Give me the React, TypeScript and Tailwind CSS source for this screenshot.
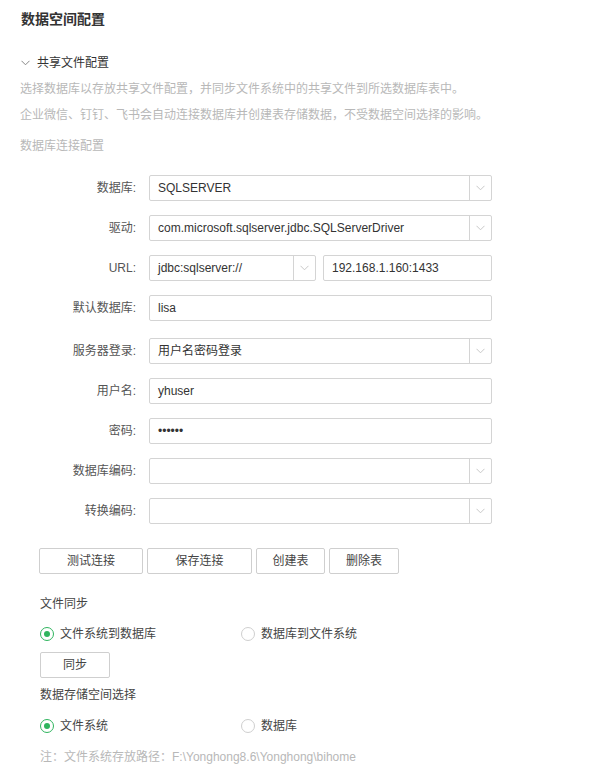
import React from 'react';

const FONT = { fontFamily: '"Liberation Sans", "Noto Sans CJK SC", sans-serif' };

function Chevron({ className = '' }: { className?: string }) {
  return (
    <svg width="9" height="6" viewBox="0 0 9 6" className={className}>
      <path d="M0.5 0.8 L4.5 4.8 L8.5 0.8" fill="none" stroke="currentColor" strokeWidth="1" />
    </svg>
  );
}

function Field({ value, select, width = 'w-[343px]' }: { value?: string; select?: boolean; width?: string }) {
  return (
    <div className={`flex h-[26px] ${width} border border-[#d4d4d4] rounded-[2px] bg-white`}>
      <div className="flex-1 flex items-center px-[8px] text-[12px] text-[#333] truncate">{value}</div>
      {select && (
        <div className="w-[22px] border-l border-[#d4d4d4] flex items-center justify-center text-[#c8c8c8]">
          <Chevron />
        </div>
      )}
    </div>
  );
}

function Row({ label, children, mt = 'mt-[14px]' }: { label: string; children: React.ReactNode; mt?: string }) {
  return (
    <div className={`flex items-center ${mt}`}>
      <div className="w-[117px] text-right text-[12px] text-[#555] pr-[1px]">{label}:</div>
      <div className="ml-[12px]">{children}</div>
    </div>
  );
}

function Radio({ checked, label }: { checked?: boolean; label: string }) {
  return (
    <div className="flex items-center leading-[16px]">
      <span
        className={`w-[14px] h-[14px] rounded-full border flex items-center justify-center ${
          checked ? 'border-[#2fb55e]' : 'border-[#cfcfcf]'
        }`}
      >
        {checked && <span className="w-[6px] h-[6px] rounded-full bg-[#2fb55e]" />}
      </span>
      <span className="ml-[6px] text-[12px] text-[#444]">{label}</span>
    </div>
  );
}

function Btn({ children, w }: { children: React.ReactNode; w: string }) {
  return (
    <button className={`h-[26px] ${w} border border-[#cfcfcf] rounded-[2px] bg-white text-[12px] text-[#444] flex items-center justify-center`}>
      {children}
    </button>
  );
}

export default function App() {
  return (
    <div className="w-[598px] min-h-[775px] bg-white px-[20px] pt-[9px]" style={FONT}>
      <h1 className="text-[14px] font-bold text-[#333] leading-[20px] ml-[1px]">数据空间配置</h1>

      <div className="flex items-center mt-[26px] text-[12px] text-[#333] leading-[16px]">
        <Chevron className="text-[#888] ml-[1px]" />
        <span className="ml-[7px]">共享文件配置</span>
      </div>

      <div className="text-[12px] text-[#b8b8b8] leading-[16px] mt-[10px]">
        选择数据库以存放共享文件配置，并同步文件系统中的共享文件到所选数据库表中。
      </div>
      <div className="text-[12px] text-[#b8b8b8] leading-[16px] mt-[10px]">
        企业微信、钉钉、飞书会自动连接数据库并创建表存储数据，不受数据空间选择的影响。
      </div>
      <div className="text-[12px] text-[#b8b8b8] leading-[16px] mt-[15px]">数据库连接配置</div>

      <div className="mt-[21px]">
        <Row label="数据库" mt="mt-0">
          <Field value="SQLSERVER" select />
        </Row>
        <Row label="驱动">
          <Field value="com.microsoft.sqlserver.jdbc.SQLServerDriver" select />
        </Row>
        <Row label="URL">
          <div className="flex gap-[7px]">
            <Field value="jdbc:sqlserver://" select width="w-[167px]" />
            <Field value="192.168.1.160:1433" width="w-[169px]" />
          </div>
        </Row>
        <Row label="默认数据库">
          <Field value="lisa" />
        </Row>
        <Row label="服务器登录" mt="mt-[17px]">
          <Field value="用户名密码登录" select />
        </Row>
        <Row label="用户名">
          <Field value="yhuser" />
        </Row>
        <Row label="密码">
          <Field value="••••••" />
        </Row>
        <Row label="数据库编码">
          <Field select />
        </Row>
        <Row label="转换编码">
          <Field select />
        </Row>
      </div>

      <div className="flex gap-[4px] mt-[24px] ml-[19px]">
        <Btn w="w-[104px]">测试连接</Btn>
        <Btn w="w-[105px]">保存连接</Btn>
        <Btn w="w-[69px]">创建表</Btn>
        <Btn w="w-[70px]">删除表</Btn>
      </div>

      <div className="ml-[20px]">
        <div className="text-[12px] text-[#444] leading-[16px] mt-[22px]">文件同步</div>
        <div className="flex mt-[14px]">
          <div className="w-[201px]">
            <Radio checked label="文件系统到数据库" />
          </div>
          <Radio label="数据库到文件系统" />
        </div>
        <div className="mt-[10px]">
          <Btn w="w-[70px]">同步</Btn>
        </div>
        <div className="text-[12px] text-[#444] leading-[16px] mt-[9px]">数据存储空间选择</div>
        <div className="flex mt-[15px]">
          <div className="w-[201px]">
            <Radio checked label="文件系统" />
          </div>
          <Radio label="数据库" />
        </div>
        <div className="text-[12px] text-[#b8b8b8] leading-[16px] mt-[15px]">
          注：文件系统存放路径：F:\Yonghong8.6\Yonghong\bihome
        </div>
      </div>
    </div>
  );
}
